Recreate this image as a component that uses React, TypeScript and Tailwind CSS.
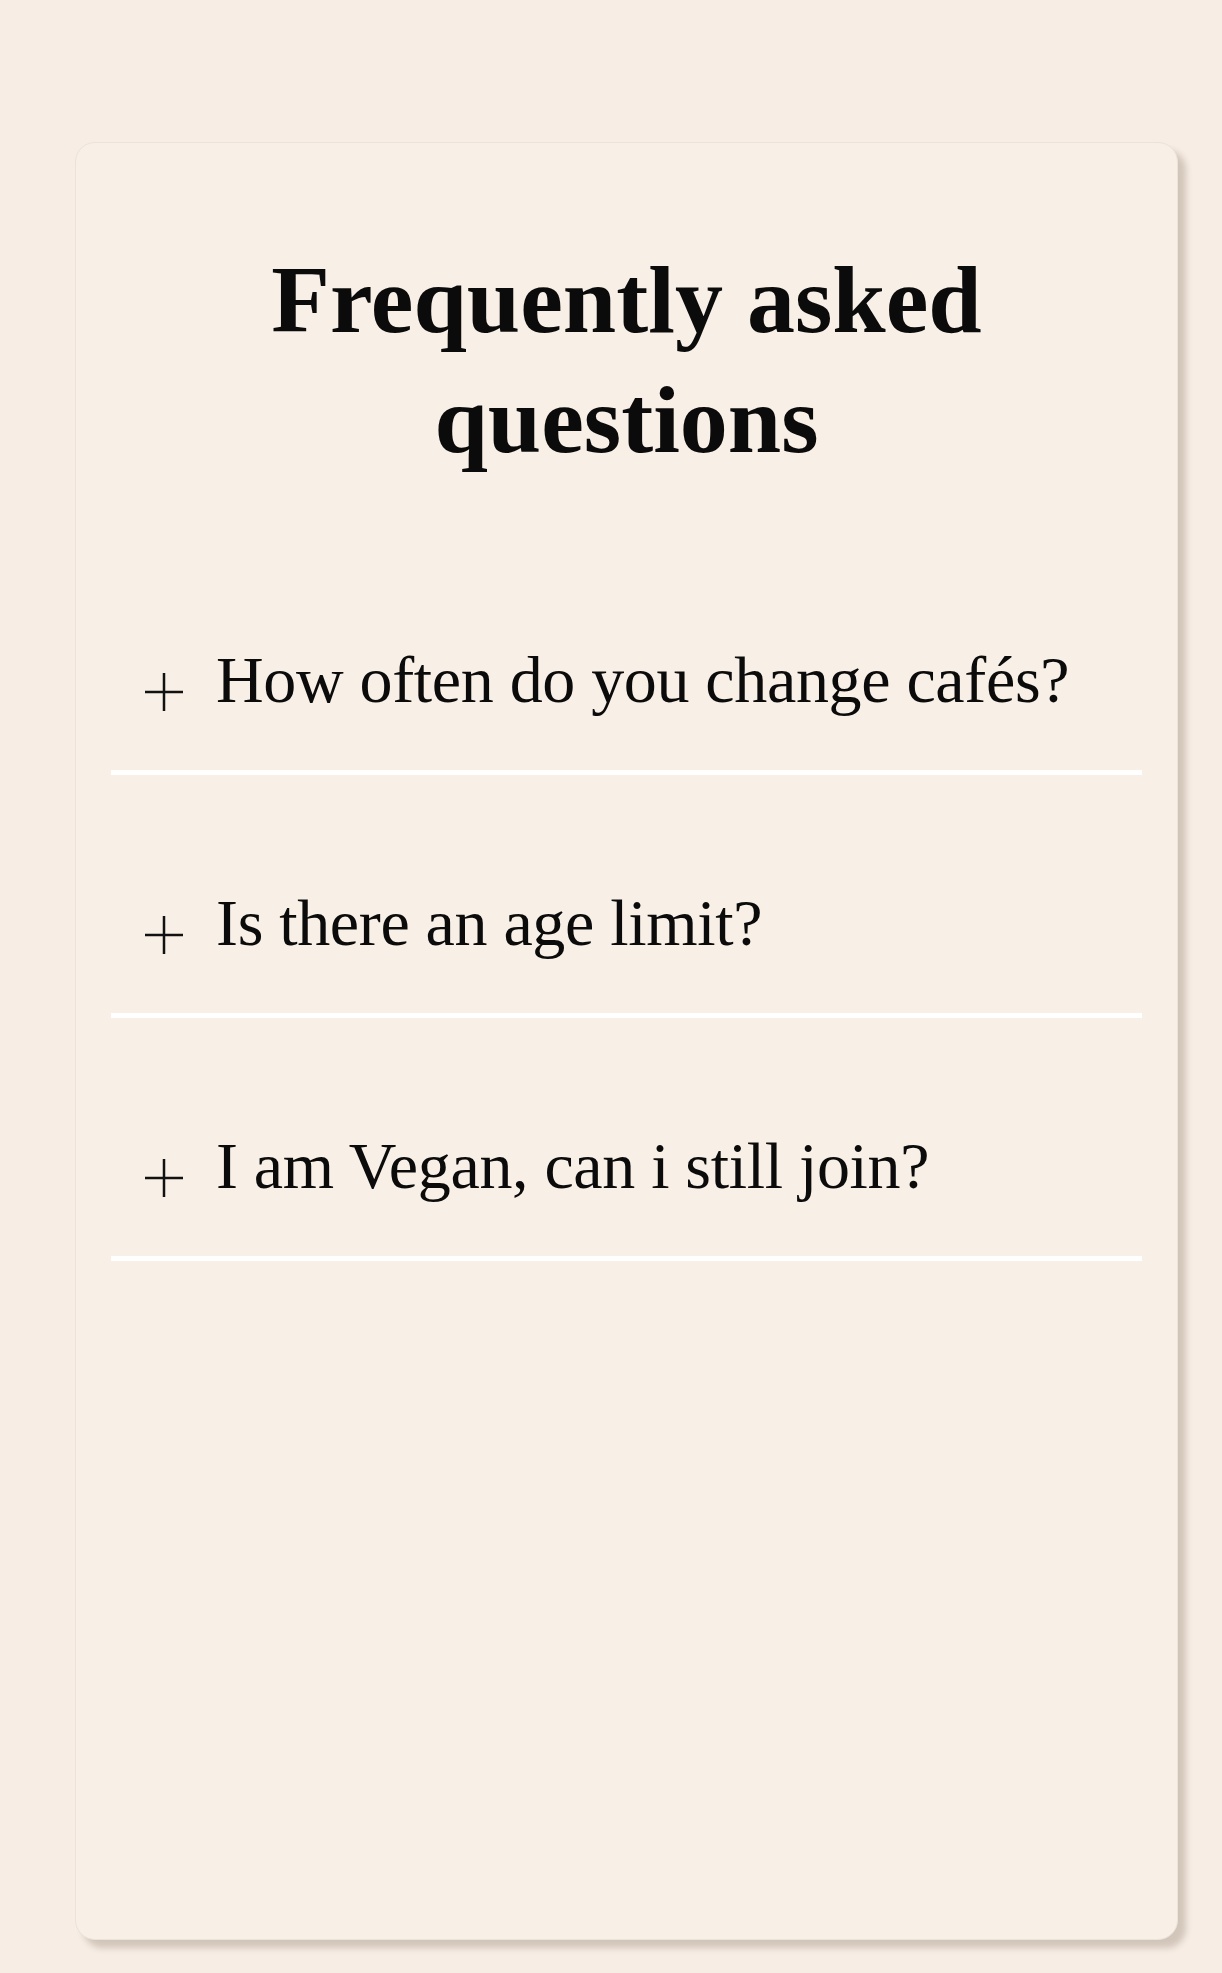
import React from "react";

const faqs = [
  "How often do you change cafés?",
  "Is there an age limit?",
  "I am Vegan, can i still join?",
];

const PlusIcon = () => (
  <svg
    width="38"
    height="38"
    viewBox="0 0 38 38"
    className="shrink-0 mt-[33px]"
    aria-hidden="true"
  >
    <path d="M19 0V38M0 19H38" stroke="#111" strokeWidth="2.5" fill="none" />
  </svg>
);

const App = () => {
  return (
    <div
      className="min-h-[1973px] bg-[#f7ede4] pt-[142px] pl-[75px]"
      style={{ fontFamily: '"Liberation Serif", "Times New Roman", serif' }}
    >
      <div className="w-[1103px] h-[1798px] rounded-[20px] border border-[#ebe2d8] bg-[#f8efe6] shadow-[8px_8px_6px_rgba(80,60,40,0.22)] px-[35px] pt-[97px]">
        <h1 className="mx-auto max-w-[820px] text-center text-[96px] leading-[120px] font-bold text-[#0b0b0b]">
          Frequently asked questions
        </h1>

        <ul className="mt-[52px]">
          {faqs.map((q) => (
            <li
              key={q}
              className="flex items-start gap-[33px] pl-[34px] pt-[108px] pb-[50px] border-b-[5px] border-white cursor-pointer"
            >
              <PlusIcon />
              <span className="text-[66px] leading-[80px] tracking-[-0.005em] text-[#0b0b0b]">
                {q}
              </span>
            </li>
          ))}
        </ul>
      </div>
    </div>
  );
};

export default App;
